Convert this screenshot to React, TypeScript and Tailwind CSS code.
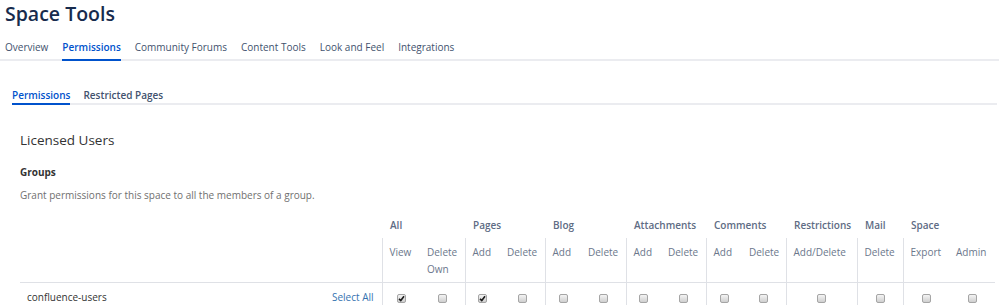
import React from 'react';

type Col = { label: string[]; width: number; checked?: boolean };
type Group = { title: string; cols: Col[] };

const groups: Group[] = [
  { title: 'All', cols: [{ label: ['View'], width: 38, checked: true }, { label: ['Delete', 'Own'], width: 45 }] },
  { title: 'Pages', cols: [{ label: ['Add'], width: 35, checked: true }, { label: ['Delete'], width: 45 }] },
  { title: 'Blog', cols: [{ label: ['Add'], width: 36 }, { label: ['Delete'], width: 45 }] },
  { title: 'Attachments', cols: [{ label: ['Add'], width: 35 }, { label: ['Delete'], width: 45 }] },
  { title: 'Comments', cols: [{ label: ['Add'], width: 36 }, { label: ['Delete'], width: 44 }] },
  { title: 'Restrictions', cols: [{ label: ['Add/Delete'], width: 71 }] },
  { title: 'Mail', cols: [{ label: ['Delete'], width: 46 }] },
  { title: 'Space', cols: [{ label: ['Export'], width: 46 }, { label: ['Admin'], width: 46 }] },
];

const navItems = ['Overview', 'Permissions', 'Community Forums', 'Content Tools', 'Look and Feel', 'Integrations'];

const Checkbox: React.FC<{ checked?: boolean }> = ({ checked }) => (
  <span className="inline-flex w-[9px] h-[9px] rounded-[2px] border border-[#a5a5a5] bg-gradient-to-b from-[#f4f4f4] to-[#cfcfcf] items-center justify-center align-middle">
    {checked && (
      <svg width="7" height="7" viewBox="0 0 7 7">
        <path d="M1 3.8 L2.8 5.5 L6 1.3" fill="none" stroke="#1a1a1a" strokeWidth="1.6" />
      </svg>
    )}
  </span>
);

const App: React.FC = () => {
  return (
    <div className="w-[999px] h-[305px] overflow-hidden bg-white font-['Open_Sans',sans-serif] text-[#333]">
      {/* Header */}
      <div className="px-[5px]">
        <h1 className="h-[28px] leading-[28px] text-[19.5px] font-semibold text-[#172b4d]">Space Tools</h1>
      </div>
      <div className="flex gap-[14px] px-[5px] border-b-2 border-[#ebecf0]">
        {navItems.map((item) => (
          <div
            key={item}
            className={
              item === 'Permissions'
                ? 'pt-[12px] pb-[5px] leading-[14px] text-[10px] font-semibold text-[#0052cc] border-b-2 border-[#0052cc] -mb-[2px]'
                : 'pt-[12px] pb-[5px] leading-[14px] text-[10px] text-[#42526e] border-b-2 border-transparent -mb-[2px]'
            }
          >
            {item}
          </div>
        ))}
      </div>

      {/* Sub tabs */}
      <div className="ml-[12px] mr-[2px] mt-[27px] flex gap-[13px] border-b-2 border-[#ebecf0]">
        <div className="pb-[1px] leading-[14px] text-[10px] font-semibold text-[#0052cc] border-b-2 border-[#0052cc] -mb-[2px]">
          Permissions
        </div>
        <div className="pb-[1px] leading-[14px] text-[10px] font-semibold text-[#42526e] border-b-2 border-transparent -mb-[2px]">
          Restricted Pages
        </div>
      </div>

      <div className="px-[20px]">
        <h2 className="mt-[25px] h-[20px] leading-[20px] text-[13.5px] text-[#333]">Licensed Users</h2>
        <h3 className="mt-[14px] h-[16px] leading-[16px] text-[10px] font-bold text-[#333]">Groups</h3>
        <p className="mt-[7px] h-[16px] leading-[16px] text-[10px] text-[#707070]">
          Grant permissions for this space to all the members of a group.
        </p>

        <table className="mt-[9px] w-[975px] table-fixed border-collapse text-[10px]">
          <colgroup>
            <col className="w-[362px]" />
            {groups.flatMap((g) => g.cols).map((c, i) => (
              <col key={i} style={{ width: c.width }} />
            ))}
          </colgroup>
          <thead>
            <tr>
              <th />
              {groups.map((g) => (
                <th
                  key={g.title}
                  colSpan={g.cols.length}
                  className="pt-[5px] pb-[5px] pl-[8px] leading-[16px] text-left font-semibold text-[#5e6c84]"
                >
                  {g.title}
                </th>
              ))}
            </tr>
            <tr className="border-b border-[#dfe1e6]">
              <th />
              {groups.map((g) =>
                g.cols.map((c, i) => (
                  <th
                    key={g.title + i}
                    className={
                      'pt-[6px] pb-[4px] pl-[7px] align-top text-left font-normal leading-[17px] text-[#6b778c] whitespace-nowrap ' +
                      (i === 0 ? 'border-l border-[#dfe1e6]' : '')
                    }
                  >
                    {c.label.map((l) => (
                      <div key={l}>{l}</div>
                    ))}
                  </th>
                ))
              )}
            </tr>
          </thead>
          <tbody>
            <tr>
              <td className="pt-[6px] pb-[6px] pl-[7px] pr-[8px] leading-[16px]">
                <div className="flex justify-between">
                  <span className="text-[#333]">confluence-users</span>
                  <span className="text-[#3572b0]">Select All</span>
                </div>
              </td>
              {groups.map((g) =>
                g.cols.map((c, i) => (
                  <td
                    key={g.title + i}
                    className={'pt-[6px] pb-[6px] text-center leading-[16px] ' + (i === 0 ? 'border-l border-[#dfe1e6]' : '')}
                  >
                    <Checkbox checked={c.checked} />
                  </td>
                ))
              )}
            </tr>
          </tbody>
        </table>
      </div>
    </div>
  );
};

export default App;
